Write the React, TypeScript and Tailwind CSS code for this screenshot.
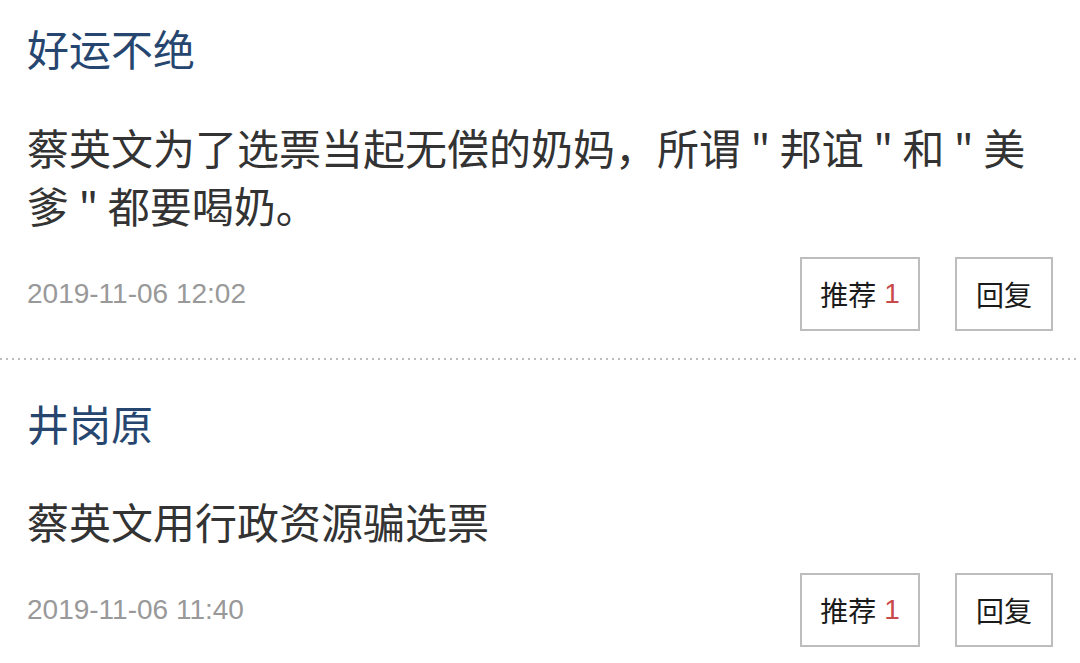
import React from "react";

type C = { name: string; body: string; date: string; likes: number; first: boolean };

const comments: C[] = [
  {
    name: "好运不绝",
    body: "蔡英文为了选票当起无偿的奶妈，所谓 \" 邦谊 \" 和 \" 美爹 \" 都要喝奶。",
    date: "2019-11-06 12:02",
    likes: 1,
    first: true,
  },
  {
    name: "井岗原",
    body: "蔡英文用行政资源骗选票",
    date: "2019-11-06 11:40",
    likes: 1,
    first: false,
  },
];

function Item({ c }: { c: C }) {
  return (
    <div className={c.first ? "pt-[18px] pb-[27px]" : "pt-[33px] pb-[27px]"}>
      <div className="px-[27px] flex flex-col">
        <div className="text-[42px] leading-[60px] text-[#26466f] font-['Noto_Sans_CJK_SC',sans-serif]">
          {c.name}
        </div>
        <div
          className={
            c.first
              ? "mt-[40px] text-[42px] leading-[58px] text-[#333333] pr-[20px] font-['Noto_Sans_CJK_SC',sans-serif]"
              : "mt-[39px] text-[42px] leading-[58px] text-[#333333] pr-[20px] font-['Noto_Sans_CJK_SC',sans-serif]"
          }
        >
          {c.body}
        </div>
        <div className="mt-[23px] flex items-center justify-between">
          <div className="text-[28px] text-[#999999] font-['Liberation_Sans',Arial,sans-serif]">
            {c.date}
          </div>
          <div className="flex gap-[35px]">
            <div className="w-[120px] h-[74px] border-2 border-[#bdbdbd] flex items-center justify-center text-[28px] text-[#1a1a1a] font-['Noto_Sans_CJK_SC',sans-serif]">
              推荐
              <span className="ml-[8px] text-[#c84a4a] font-['Liberation_Sans',Arial,sans-serif]">
                {c.likes}
              </span>
            </div>
            <div className="w-[98px] h-[74px] border-2 border-[#bdbdbd] flex items-center justify-center text-[28px] text-[#1a1a1a] font-['Noto_Sans_CJK_SC',sans-serif]">
              回复
            </div>
          </div>
        </div>
      </div>
    </div>
  );
}

export default function App() {
  return (
    <div className="w-[1080px] h-[663px] bg-white overflow-hidden">
      <Item c={comments[0]} />
      <div className="h-[2px] w-full bg-[linear-gradient(to_right,#bdbdbd_2px,transparent_2px)] bg-[length:6px_2px] bg-repeat-x" />
      <Item c={comments[1]} />
    </div>
  );
}
